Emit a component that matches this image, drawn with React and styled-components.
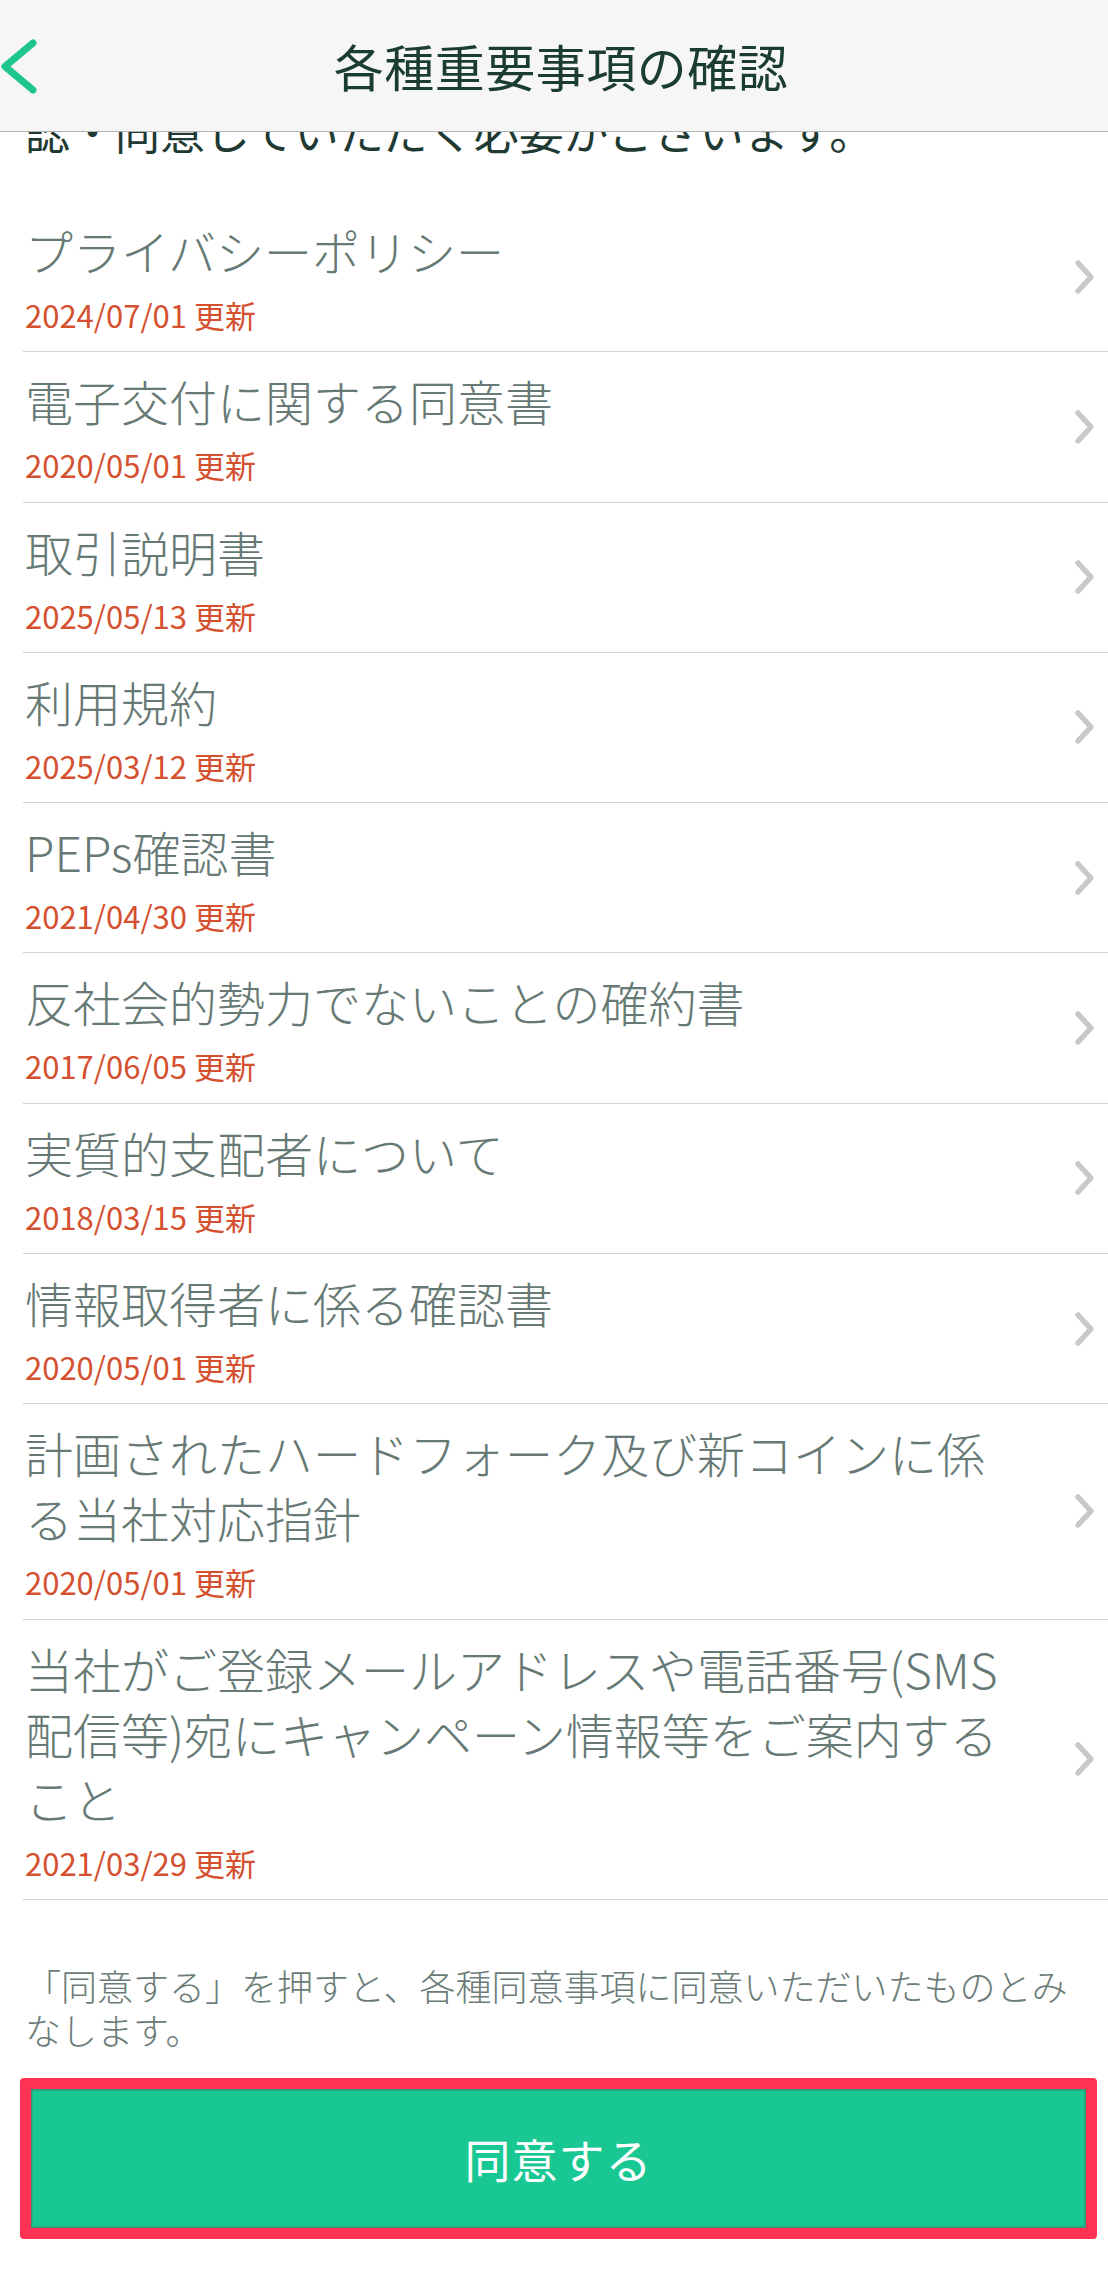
import React from "react";
import styled, { createGlobalStyle } from "styled-components";

const GlobalStyle = createGlobalStyle`
  html, body {
    margin: 0;
    padding: 0;
    background: #ffffff;
  }
  body {
    font-family: "Noto Sans CJK JP", "Noto Sans", "Liberation Sans", sans-serif;
    -webkit-font-smoothing: antialiased;
  }
  * { box-sizing: border-box; }
`;

const Page = styled.div`
  position: relative;
  width: 1108px;
  height: 2288px;
  overflow: hidden;
  background: #ffffff;
`;

const Header = styled.header`
  position: absolute;
  top: 0;
  left: 0;
  right: 0;
  height: 132px;
  z-index: 2;
  display: grid;
  grid-template-columns: 60px 1fr 60px;
  align-items: center;
  background: #f6f6f6;
  border-bottom: 1px solid #b3b3b3;
`;

const BackButton = styled.button`
  display: flex;
  align-items: center;
  justify-content: flex-start;
  height: 100%;
  padding: 0;
  margin: 0;
  border: none;
  background: transparent;
  color: #1ec58f;
`;

const Title = styled.h1`
  margin: 0;
  padding: 0 0 2px 14px;
  text-align: center;
  font-size: 50px;
  line-height: 60px;
  font-weight: 400;
  color: #1b3c33;
  letter-spacing: 0.5px;
`;

const Intro = styled.p`
  margin: 101px 0 41px;
  padding-left: 25px;
  font-size: 45px;
  line-height: 60px;
  font-weight: 400;
  color: #1f3a33;
  white-space: nowrap;
`;

const List = styled.ul`
  list-style: none;
  margin: 0 0 0 23px;
  padding: 0;
`;

const Row = styled.li`
  display: flex;
  align-items: center;
  justify-content: space-between;
  padding: 16px 13px 16.3px 2px;
  border-bottom: 1px solid #d2d2d2;
  cursor: pointer;
`;

const RowText = styled.div`
  width: 990px;
  display: flex;
  flex-direction: column;
`;

const RowTitle = styled.span`
  font-size: 48px;
  line-height: 65px;
  color: #667974;
  font-weight: 300;
`;

const RowDate = styled.span`
  margin-top: 12px;
  font-size: 31px;
  line-height: 40px;
  color: #d4502f;
  font-weight: 400;
`;

const Note = styled.p`
  margin: 63px 0 27px 25px;
  width: 1060px;
  font-size: 36px;
  line-height: 44px;
  font-weight: 300;
  color: #6b7c78;
`;

const Highlight = styled.div`
  margin-left: 20px;
  width: 1077px;
  height: 161px;
  border: 11px solid #ff3253;
  border-radius: 4px;
  display: flex;
`;

const AgreeButton = styled.button`
  flex: 1;
  margin: 0;
  border: none;
  background: #19c793;
  box-shadow: inset 0 0 0 1.5px rgba(80, 90, 85, 0.45);
  color: #ffffff;
  font-family: inherit;
  font-size: 46px;
  font-weight: 400;
  letter-spacing: 1px;
  padding-bottom: 2px;
`;

const BackIcon = () => (
  <svg width="40" height="60" viewBox="0 0 40 60" aria-hidden="true">
    <path
      d="M33 7 L5 30.5 L33 54"
      fill="none"
      stroke="currentColor"
      strokeWidth="7"
      strokeLinecap="round"
      strokeLinejoin="round"
    />
  </svg>
);

const ChevronIcon = () => (
  <svg width="22" height="36" viewBox="0 0 22 36" aria-hidden="true">
    <path
      d="M5 4 L18 18 L5 32"
      fill="none"
      stroke="#c8c8c8"
      strokeWidth="5.5"
      strokeLinecap="round"
      strokeLinejoin="round"
    />
  </svg>
);

const items = [
  { title: "プライバシーポリシー", date: "2024/07/01" },
  { title: "電子交付に関する同意書", date: "2020/05/01" },
  { title: "取引説明書", date: "2025/05/13" },
  { title: "利用規約", date: "2025/03/12" },
  { title: "PEPs確認書", date: "2021/04/30" },
  { title: "反社会的勢力でないことの確約書", date: "2017/06/05" },
  { title: "実質的支配者について", date: "2018/03/15" },
  { title: "情報取得者に係る確認書", date: "2020/05/01" },
  { title: "計画されたハードフォーク及び新コインに係る当社対応指針", date: "2020/05/01" },
  {
    title: "当社がご登録メールアドレスや電話番号(SMS配信等)宛にキャンペーン情報等をご案内すること",
    date: "2021/03/29",
  },
];

export default function App() {
  return (
    <Page>
      <GlobalStyle />
      <Header>
        <BackButton aria-label="戻る">
          <BackIcon />
        </BackButton>
        <Title>各種重要事項の確認</Title>
        <span />
      </Header>

      <Intro>認・同意していただく必要がございます。</Intro>

      <List>
        {items.map((item) => (
          <Row key={item.title}>
            <RowText>
              <RowTitle>{item.title}</RowTitle>
              <RowDate>{item.date} 更新</RowDate>
            </RowText>
            <ChevronIcon />
          </Row>
        ))}
      </List>

      <Note>「同意する」を押すと、各種同意事項に同意いただいたものとみなします。</Note>

      <Highlight>
        <AgreeButton>同意する</AgreeButton>
      </Highlight>
    </Page>
  );
}
